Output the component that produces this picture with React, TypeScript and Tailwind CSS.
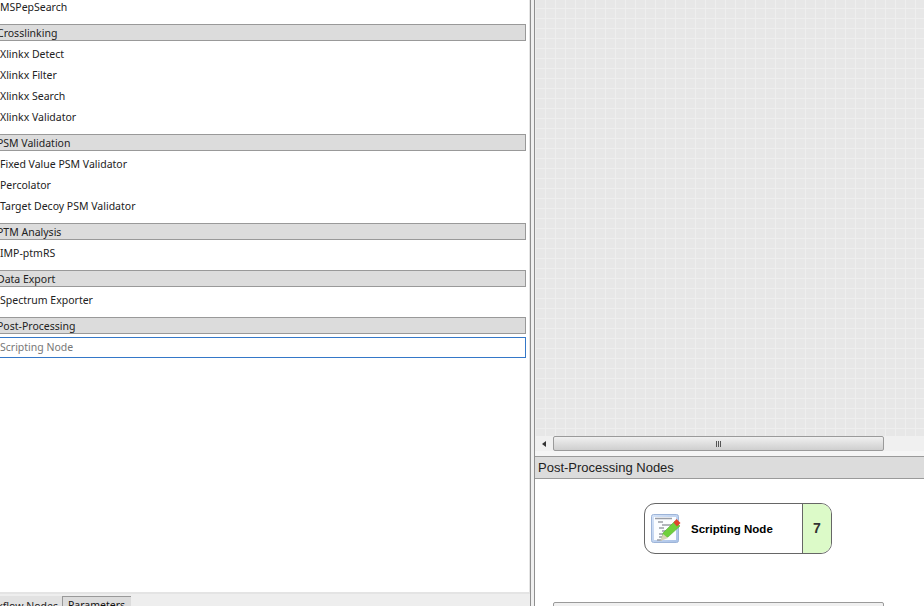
const font = "font-['Noto_Sans',sans-serif]";

function Header({ label }: { label: string }) {
  return (
    <div className="mt-[6px] -ml-[3px] flex h-[17px] w-[529px] items-center border-y border-r border-[#999] bg-[#dcdcdc] pt-[1px] text-[10.5px] text-[#222]">
      <span className="leading-none">{label}</span>
    </div>
  );
}

function Row({ label }: { label: string }) {
  return <div className="flex h-[21px] items-center whitespace-nowrap text-[10.5px] text-[#222]">{label}</div>;
}

function ScriptIcon() {
  return (
    <svg width="30" height="30" viewBox="0 0 30 30">
      <defs>
        <linearGradient id="frame" x1="0" y1="0" x2="1" y2="1">
          <stop offset="0" stopColor="#d6e4f8" />
          <stop offset="1" stopColor="#a9c1e6" />
        </linearGradient>
      </defs>
      <rect x="0.5" y="0.5" width="27" height="28" rx="2" fill="url(#frame)" stroke="#9db4d8" />
      <rect x="3" y="3" width="22" height="23" fill="#fbfdff" />
      <path d="M4 4.500h17M7 8h5M11 11h13M8 14h5M11 17h4M8 20h4M8 23h3M6 26h5" stroke="#9a9ea6" strokeWidth="1.300" />
      <path d="M11 25l1-6 12-12 5 5-12 11z" fill="#6fd03c" stroke="#4aa52a" strokeWidth="0.500" />
      <path d="M22.500 8.500l3-3.500 4 4-3.500 3.500z" fill="#e0452c" />
      <path d="M9.500 27l2.500-7 5 4z" fill="#d8d2b8" />
    </svg>
  );
}

export default function App() {
  return (
    <div className={`${font} flex h-[606px] w-[924px] overflow-hidden bg-white`}>
      <div className="flex h-full w-[530px] shrink-0 flex-col">
        <div className="h-[594px] shrink-0 overflow-hidden border-r border-b-2 border-[#e4e4e4]">
          <div className="-mt-[3px]">
            <Row label="MSPepSearch" />
            <Header label="Crosslinking" />
            <div className="mt-[3px]">
              <Row label="Xlinkx Detect" />
              <Row label="Xlinkx Filter" />
              <Row label="Xlinkx Search" />
              <Row label="Xlinkx Validator" />
            </div>
            <Header label="PSM Validation" />
            <div className="mt-[3px]">
              <Row label="Fixed Value PSM Validator" />
              <Row label="Percolator" />
              <Row label="Target Decoy PSM Validator" />
            </div>
            <Header label="PTM Analysis" />
            <div className="mt-[3px]">
              <Row label="IMP-ptmRS" />
            </div>
            <Header label="Data Export" />
            <div className="mt-[3px]">
              <Row label="Spectrum Exporter" />
            </div>
            <Header label="Post-Processing" />
            <div className="mt-[3px] flex h-[21px] w-[526px] items-center border border-l-0 border-[#3578c8] text-[10.5px] text-[#777]">
              Scripting Node
            </div>
          </div>
        </div>
        <div className="flex flex-1 items-end bg-[#eeeeee]">
          <div className="flex h-[10px] w-[62px] justify-end overflow-hidden whitespace-nowrap bg-[#e2e2e2] pr-[4px] text-[10.5px] leading-[20px] text-[#222]">Workflow Nodes</div>
          <div className="h-[10px] w-[69px] overflow-hidden border-t border-l border-[#999] bg-[#dcdcdc] pl-[5px] text-[10.5px] leading-[17px] text-[#111]">Parameters</div>
        </div>
      </div>

      <div className="w-[5px] shrink-0 border-x border-[#8f8f8f] bg-[#f0f0f0]" />

      <div className="flex h-full min-w-0 flex-1 flex-col">
        <div className="h-[436px] shrink-0 bg-[#e7e7e7] bg-[linear-gradient(#eeeeee_1px,transparent_1px),linear-gradient(90deg,#eeeeee_1px,transparent_1px)] bg-[size:10px_10px] bg-[position:0_-2px]" />
        <div className="flex h-[15px] shrink-0 items-center bg-[#f0f0f0]">
          <div className="flex w-[18px] justify-center">
            <div className="h-0 w-0 border-y-[3px] border-r-[4px] border-y-transparent border-r-[#333]" />
          </div>
          <div className="flex h-[15px] w-[331px] items-center justify-center rounded-[2px] border border-[#9a9a9a] bg-gradient-to-b from-[#f0f0f0] to-[#cfcfcf]">
            <div className="flex gap-[1px]">
              <div className="h-[6px] w-[1px] bg-[#555]" />
              <div className="h-[6px] w-[1px] bg-[#555]" />
              <div className="h-[6px] w-[1px] bg-[#555]" />
            </div>
          </div>
        </div>
        <div className="h-[5px] shrink-0 bg-[#f5f5f5]" />
        <div className="flex h-[23px] shrink-0 items-center border-y border-[#9a9a9a] bg-[#dcdcdc] pl-[3px] font-['Liberation_Sans',sans-serif] text-[13px] text-[#222]">
          Post-Processing Nodes
        </div>
        <div className="flex flex-1 flex-col bg-white">
          <div className="ml-[109px] mt-[24px] flex h-[51px] w-[188px] items-stretch overflow-hidden rounded-[11px] border border-[#666]">
            <div className="flex flex-1 items-center pl-[6px]">
              <ScriptIcon />
              <span className="ml-[10px] pt-[2px] font-['Liberation_Sans',sans-serif] text-[11.5px] font-bold text-black">Scripting Node</span>
            </div>
            <div className="flex w-[29px] items-center justify-center border-l border-[#666] bg-[#dcfac8] pb-[1px] font-['Liberation_Sans',sans-serif] text-[14px] font-bold text-[#333]">
              7
            </div>
          </div>
          <div className="ml-[18px] mt-[48px] h-[8px] w-[331px] rounded-t-[2px] border border-[#9a9a9a] bg-[#f0f0f0]" />
        </div>
      </div>
    </div>
  );
}
